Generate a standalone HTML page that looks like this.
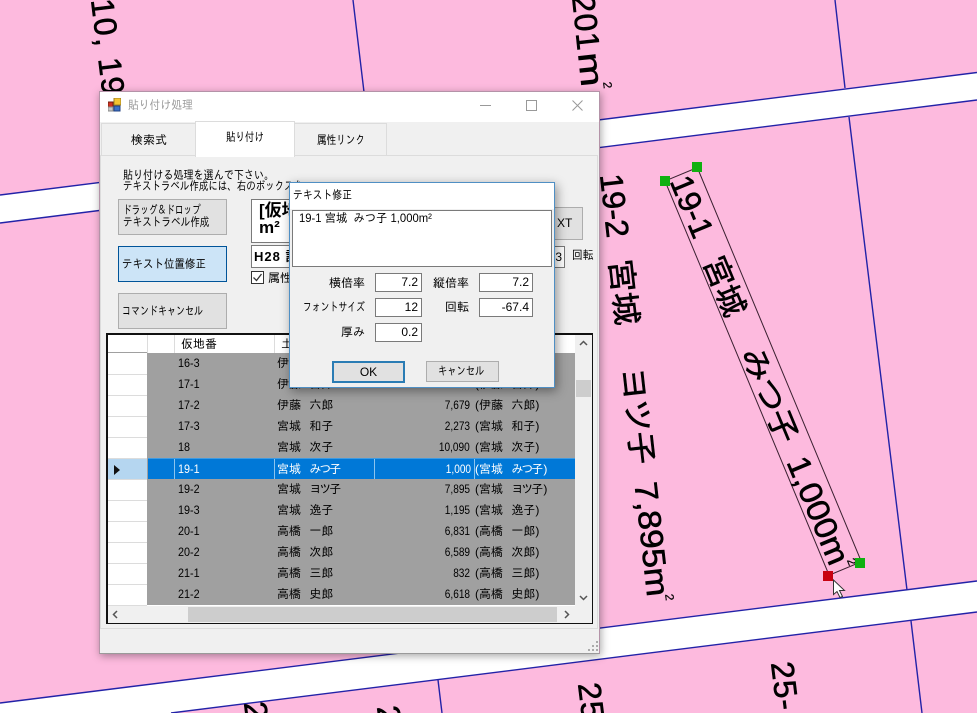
<!DOCTYPE html>
<html lang="ja"><head><meta charset="utf-8"><title>貼り付け処理</title>
<style>
html,body{margin:0;padding:0;width:977px;height:713px;overflow:hidden;background:#fdbade}
body{position:relative;font-family:"Liberation Sans","IPAGothic","Noto Sans CJK JP",sans-serif;font-size:12px;color:#000}
svg.bg{position:absolute;left:0;top:0}
svg.bg text{font-family:"Liberation Sans","Noto Sans CJK JP",sans-serif;font-size:32px;fill:#000;stroke:#000;stroke-width:.6}
.a{position:absolute;white-space:pre;line-height:14px;transform-origin:left center}
.box{position:absolute;box-sizing:border-box}
.btn{position:absolute;box-sizing:border-box;background:#e1e1e1;border:1px solid #adadad}
.inp{position:absolute;box-sizing:border-box;background:#fff;border:1px solid #7a7a7a;text-align:right;padding-right:3px;line-height:17px;height:19px}
.lab{position:absolute;text-align:right;line-height:14px;white-space:pre}
.r{position:absolute;left:0;width:428px;height:21px;line-height:21px;white-space:pre;word-spacing:5px}
.r span{position:absolute;top:0}
.r .c1{left:31px;word-spacing:0;transform:scaleX(.9);transform-origin:left center}.r .c2{left:130px}
.r .c3{right:105px;word-spacing:0;transform:scaleX(.84);transform-origin:right center}.r .c4{left:328px}
.k{font-style:normal;letter-spacing:-2px}
.rh{position:absolute;left:108px;width:39px;height:20px;border-bottom:1px solid #dcdcdc;background:#fff}
</style></head><body>
<svg class="bg" width="977" height="713" viewBox="0 0 977 713">
<rect width="977" height="713" fill="#fdbade"/>
<polygon points="0,195 977,72.5 977,100 0,223" fill="#fff"/>
<polygon points="0,703 977,581 977,612 171,713 0,713" fill="#fff"/>
<g stroke="#2222a8" stroke-width="1.4" fill="none">
<path d="M0 195L977 72.5M0 223L977 100M0 703L977 581M171 713L977 612"/>
<path d="M353 0L364 92M835 0L845 88M849 117L907 590M911 621L922 713M438 680L442 713"/>
</g>
<g transform="translate(91,0) rotate(83)"><text x="0" y="0" letter-spacing="1.5">10, 19</text></g>
<g transform="translate(572,-4) rotate(84)"><text x="0" y="0" letter-spacing="1">201</text><text x="58" y="0" textLength="34" lengthAdjust="spacingAndGlyphs">m</text><text x="89" y="-22" style="font-size:12px;stroke-width:.2">2</text></g>
<g transform="translate(600,175) rotate(83.6)">
<text x="0" y="0" textLength="64" lengthAdjust="spacingAndGlyphs">19-2</text>
<text x="86" y="0" textLength="66" lengthAdjust="spacingAndGlyphs" style="font-size:30px">宮城</text>
<text x="195" y="0" textLength="97" lengthAdjust="spacingAndGlyphs" style="font-size:30px">ヨツ子</text>
<text x="310" y="0" textLength="115" lengthAdjust="spacingAndGlyphs">7,895m</text>
<text x="424" y="-18" style="font-size:12px;stroke-width:.2">2</text></g>
<g transform="translate(665,181) rotate(67.4)">
<path d="M0 0H427V-35H0Z" fill="none" stroke="#3a2030" stroke-width="1"/>
<g transform="translate(0,-4)">
<text x="2" y="0" textLength="64" lengthAdjust="spacingAndGlyphs">19-1</text>
<text x="89" y="0" textLength="62" lengthAdjust="spacingAndGlyphs" style="font-size:30px">宮城</text>
<text x="188" y="0" textLength="100" lengthAdjust="spacingAndGlyphs" style="font-size:30px">みつ子</text>
<text x="306" y="0" textLength="114" lengthAdjust="spacingAndGlyphs">1,000m</text>
<text x="420" y="-18" style="font-size:12px;stroke-width:.2">2</text></g></g>
<rect x="660" y="176" width="10" height="10" fill="#10b010"/>
<rect x="692" y="162" width="10" height="10" fill="#10b010"/>
<rect x="855" y="558" width="10" height="10" fill="#10b010"/>
<rect x="823" y="571" width="10" height="10" fill="#c80010"/>
<path d="M833.5 580V594.5L837 591.5L840 597.5L842.5 596.5L839.5 590.5H844.5Z" fill="#fff" stroke="#333" stroke-width="1"/>
<g transform="translate(244,703) rotate(83)"><text>2</text></g>
<g transform="translate(377,707) rotate(83)"><text>2</text></g>
<g transform="translate(578,684) rotate(83)"><text letter-spacing="1">25</text></g>
<g transform="translate(771,663) rotate(83)"><text letter-spacing="1">25-</text></g>
</svg>

<!-- main window -->
<div class="box" style="left:99px;top:91px;width:501px;height:563px;background:#f0f0f0;border:1px solid #b493a8;border-bottom-color:#9a9a9a;box-shadow:1px 2px 8px rgba(0,0,0,.35)"></div>
<div class="box" style="left:100px;top:92px;width:499px;height:30px;background:#fff"></div>
<svg style="position:absolute;left:108px;top:98px" width="13" height="14" viewBox="0 0 13 14"><rect x="6" y="0" width="7" height="7" fill="#f4c430" stroke="#a08020"/><rect x="0" y="4" width="5" height="5" fill="#d03020" stroke="#702010"/><rect x="0" y="9" width="5" height="4" fill="#c8c8c8" stroke="#888"/><rect x="6" y="8" width="6" height="5" fill="#3a70c8" stroke="#204080"/></svg>
<div class="a" style="left:128px;top:98px;color:#999;transform:scaleX(.9)">貼り付け処理</div>
<svg style="position:absolute;left:475px;top:95px" width="115" height="20" viewBox="0 0 115 20" fill="none" stroke="#999" stroke-width="1"><path d="M5 10.5H16M51.5 5.5H61.5V15.5H51.5ZM97.5 5.5L107.5 15.5M107.5 5.5L97.5 15.5"/></svg>
<!-- tabs -->
<div class="box" style="left:100px;top:155px;width:498px;height:474px;background:#f0f0f0;border:1px solid #dcdcdc"></div>
<div class="box" style="left:101px;top:123px;width:95px;height:33px;background:#f0f0f0;border:1px solid #dcdcdc"></div>
<div class="box" style="left:294px;top:123px;width:93px;height:33px;background:#f0f0f0;border:1px solid #dcdcdc"></div>
<div class="box" style="left:195px;top:121px;width:100px;height:36px;background:#fff;border:1px solid #dcdcdc;border-bottom:0"></div>
<div class="a" style="left:131px;top:133px">検索式</div>
<div class="a" style="left:226px;top:130px;transform:scaleX(.79)">貼り付け</div>
<div class="a" style="left:317px;top:133px;transform:scaleX(.8)">属性リンク</div>
<!-- labels -->
<div class="a" style="left:123px;top:170px;line-height:11px;transform:scaleX(.84)">貼り付ける処理を選んで下さい。</div>
<div class="a" style="left:123px;top:181px;line-height:11px;transform:scaleX(.79)">テキストラベル作成には、右のボックスを</div>
<!-- buttons -->
<div class="btn" style="left:118px;top:199px;width:109px;height:36px"></div>
<div class="a" style="left:123px;top:204px;line-height:12px;transform:scaleX(.72)">ドラッグ＆ドロップ</div>
<div class="a" style="left:123px;top:216px;line-height:12px;transform:scaleX(.8)">テキストラベル作成</div>
<div class="btn" style="left:118px;top:246px;width:109px;height:36px;background:#cce4f7;border-color:#005499"></div>
<div class="a" style="left:122px;top:257px;transform:scaleX(.875)">テキスト位置修正</div>
<div class="btn" style="left:118px;top:293px;width:109px;height:36px"></div>
<div class="a" style="left:122px;top:304px;transform:scaleX(.75)">コマンドキャンセル</div>
<!-- right controls -->
<div class="box" style="left:251px;top:199px;width:100px;height:44px;background:#fff;border:1px solid #7a7a7a;overflow:hidden;font-weight:bold;font-size:17px;line-height:17px;padding:2px 0 0 7px;font-family:'Liberation Sans','Noto Sans CJK JP',sans-serif;white-space:pre">[仮地
m²</div>
<div class="box" style="left:251px;top:245px;width:100px;height:23px;background:#fff;border:1px solid #7a7a7a;font-weight:bold;font-size:13px;line-height:21px;padding-left:2px;letter-spacing:1px;font-family:'Liberation Sans','Noto Sans CJK JP',sans-serif;white-space:pre">H28 計</div>
<div class="box" style="left:251px;top:271px;width:13px;height:13px;background:#fff;border:1px solid #333"></div>
<svg style="position:absolute;left:252px;top:272px" width="11" height="11" viewBox="0 0 11 11"><path d="M1.5 5.5L4.5 8.5L9.5 2" fill="none" stroke="#333" stroke-width="1.3"/></svg>
<div class="a" style="left:268px;top:271px">属性</div>
<div class="btn" style="left:520px;top:207px;width:63px;height:33px"></div>
<div class="a" style="left:557px;top:216px">XT</div>
<div class="box" style="left:500px;top:246px;width:65px;height:22px;background:#fff;border:1px solid #7a7a7a;text-align:right;padding-right:2px;line-height:20px">3</div>
<div class="a" style="left:572px;top:248px;transform:scaleX(.9)">回転</div>
<!-- grid -->
<div class="box" style="left:106px;top:333px;width:487px;height:291px;background:#fff;border:1px solid #111;border-width:2px 1px 1px 2px"></div>
<div class="box" style="left:147px;top:353px;width:428px;height:252px;background:#a0a0a0"></div>
<div class="box" style="left:575px;top:335px;width:17px;height:288px;background:#f0f0f0"></div>
<div class="box" style="left:108px;top:606px;width:467px;height:17px;background:#f0f0f0"></div>
<div class="box" style="left:188px;top:607px;width:369px;height:15px;background:#cdcdcd"></div>
<div class="box" style="left:558px;top:606px;width:34px;height:17px;background:#f0f0f0"></div>
<div class="box" style="left:576px;top:380px;width:15px;height:17px;background:#cdcdcd"></div>
<svg style="position:absolute;left:108px;top:335px" width="484" height="288" viewBox="108 335 484 288" fill="none" stroke="#555" stroke-width="1.5"><path d="M580 345L583.5 341.5L587 345M580 596L583.5 599.5L587 596M117 611L113.5 614.5L117 618M565 611L568.5 614.5L565 618"/><path d="M147.5 335V353M174.5 335V353M274.5 335V353" stroke="#dcdcdc" stroke-width="1"/><path d="M108 352.5H147" stroke="#a0a0a0" stroke-width="1"/></svg>
<div class="a" style="left:181px;top:337px">仮地番</div>
<div class="a" style="left:281px;top:337px">土地</div>
<div class="rh" style="top:354px"></div><div class="rh" style="top:375px"></div><div class="rh" style="top:396px"></div><div class="rh" style="top:417px"></div><div class="rh" style="top:438px"></div>
<div class="rh" style="top:459px;background:#b5d6f0"></div>
<div class="rh" style="top:480px"></div><div class="rh" style="top:501px"></div><div class="rh" style="top:522px"></div><div class="rh" style="top:543px"></div><div class="rh" style="top:564px"></div><div class="rh" style="top:585px"></div>
<svg style="position:absolute;left:113px;top:465px" width="8" height="10" viewBox="0 0 8 10"><path d="M1 0L7 5L1 10Z" fill="#111"/></svg>
<div style="position:absolute;left:147px;top:353px;width:428px;height:252px;overflow:hidden">
<div class="r" style="top:0"><span class="c1">16-3</span><span class="c2">伊藤 五郎</span></div>
<div class="r" style="top:21px"><span class="c1">17-1</span><span class="c2">伊藤 吾郎</span><span class="c3">799</span><span class="c4">(伊藤 吾郎)</span></div>
<div class="r" style="top:42px"><span class="c1">17-2</span><span class="c2">伊藤 六郎</span><span class="c3">7,679</span><span class="c4">(伊藤 六郎)</span></div>
<div class="r" style="top:63px"><span class="c1">17-3</span><span class="c2">宮城 和子</span><span class="c3">2,273</span><span class="c4">(宮城 和子)</span></div>
<div class="r" style="top:84px"><span class="c1">18</span><span class="c2">宮城 次子</span><span class="c3">10,090</span><span class="c4">(宮城 次子)</span></div>
<div class="r" style="top:105px;left:1px;width:427px;height:21px;background:#0078d7;color:#fff;border:solid #3f9be2;border-width:1px 0 0;box-sizing:border-box;line-height:21px"><span class="c1" style="left:30px">19-1</span><span class="c2" style="left:129px">宮城 <em class="k">みつ</em>子</span><span class="c3" style="right:104px">1,000</span><span class="c4" style="left:327px">(宮城 <em class="k">みつ</em>子)</span>
<i style="position:absolute;left:26px;top:0;width:1px;height:20px;background:#8cc4ee"></i><i style="position:absolute;left:126px;top:0;width:1px;height:20px;background:#8cc4ee"></i><i style="position:absolute;left:226px;top:0;width:1px;height:20px;background:#8cc4ee"></i><i style="position:absolute;left:326px;top:0;width:1px;height:20px;background:#8cc4ee"></i></div>
<div class="r" style="top:126px"><span class="c1">19-2</span><span class="c2">宮城 <em class="k">ヨツ</em>子</span><span class="c3">7,895</span><span class="c4">(宮城 <em class="k">ヨツ</em>子)</span></div>
<div class="r" style="top:147px"><span class="c1">19-3</span><span class="c2">宮城 逸子</span><span class="c3">1,195</span><span class="c4">(宮城 逸子)</span></div>
<div class="r" style="top:168px"><span class="c1">20-1</span><span class="c2">高橋 一郎</span><span class="c3">6,831</span><span class="c4">(高橋 一郎)</span></div>
<div class="r" style="top:189px"><span class="c1">20-2</span><span class="c2">高橋 次郎</span><span class="c3">6,589</span><span class="c4">(高橋 次郎)</span></div>
<div class="r" style="top:210px"><span class="c1">21-1</span><span class="c2">高橋 三郎</span><span class="c3">832</span><span class="c4">(高橋 三郎)</span></div>
<div class="r" style="top:231px"><span class="c1">21-2</span><span class="c2">高橋 史郎</span><span class="c3">6,618</span><span class="c4">(高橋 史郎)</span></div>
</div>
<!-- grip -->
<svg style="position:absolute;left:588px;top:641px" width="11" height="11" viewBox="0 0 11 11" fill="#aaa"><rect x="8" y="0" width="2" height="2"/><rect x="4" y="4" width="2" height="2"/><rect x="8" y="4" width="2" height="2"/><rect x="0" y="8" width="2" height="2"/><rect x="4" y="8" width="2" height="2"/><rect x="8" y="8" width="2" height="2"/></svg>

<!-- dialog -->
<div class="box" style="left:289px;top:182px;width:266px;height:206px;background:#f0f0f0;border:1px solid #4f8fc4;box-shadow:2px 3px 10px rgba(0,0,0,.4)"></div>
<div class="box" style="left:290px;top:183px;width:264px;height:26px;background:#fff"></div>
<div class="a" style="left:293px;top:188px;transform:scaleX(.82)">テキスト修正</div>
<div class="box" style="left:292px;top:210px;width:260px;height:57px;background:#fff;border:1px solid #7a7a7a"></div>
<div class="a" style="left:299px;top:211px;transform:scaleX(.94)">19-1 宮城  みつ子 1,000m²</div>
<div class="lab" style="left:290px;top:276px;width:75px">横倍率</div>
<div class="lab" style="left:394px;top:276px;width:75px">縦倍率</div>
<div class="lab" style="left:281px;top:300px;width:84px;transform:scaleX(.74);transform-origin:right center">フォントサイズ</div>
<div class="lab" style="left:394px;top:300px;width:75px">回転</div>
<div class="lab" style="left:290px;top:325px;width:75px">厚み</div>
<div class="inp" style="left:375px;top:273px;width:47px">7.2</div>
<div class="inp" style="left:479px;top:273px;width:54px">7.2</div>
<div class="inp" style="left:375px;top:298px;width:47px">12</div>
<div class="inp" style="left:479px;top:298px;width:54px">-67.4</div>
<div class="inp" style="left:375px;top:323px;width:47px">0.2</div>
<div class="btn" style="left:332px;top:361px;width:73px;height:22px;border:2px solid #2a7cb4;text-align:center;line-height:18px">OK</div>
<div class="btn" style="left:426px;top:361px;width:73px;height:21px"></div>
<div class="a" style="left:438px;top:364px;transform:scaleX(.77)">キャンセル</div>
</body></html>
